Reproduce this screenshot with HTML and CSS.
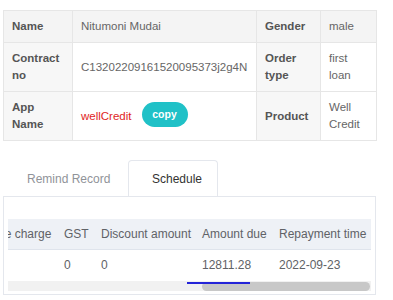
FILE: index.html
```html
<!DOCTYPE html>
<html>
<head>
<meta charset="utf-8">
<link rel="stylesheet" href="styles.css">
</head>
<body>
<div class="page">
  <table class="info">
    <colgroup>
      <col class="c1"><col class="c2"><col class="c3"><col class="c4">
    </colgroup>
    <tr class="head">
      <th>Name</th><td>Nitumoni Mudai</td><th>Gender</th><td>male</td>
    </tr>
    <tr>
      <th>Contract no</th><td>C13202209161520095373j2g4N</td><th>Order type</th><td>first loan</td>
    </tr>
    <tr>
      <th>App Name</th>
      <td><div class="app"><span class="app-name">wellCredit</span><button class="copy">copy</button></div></td>
      <th>Product</th><td>Well Credit</td>
    </tr>
  </table>

  <div class="tabs">
    <div class="tab remind">Remind Record</div>
    <div class="tab active">Schedule</div>
  </div>
  <div class="panel">
    <div class="scroll">
      <table class="sched">
        <colgroup>
          <col class="s1"><col class="s2"><col class="s3"><col class="s4"><col class="s5">
        </colgroup>
        <thead>
          <tr><th>Late charge</th><th>GST</th><th>Discount amount</th><th>Amount due</th><th>Repayment time</th></tr>
        </thead>
        <tbody>
          <tr><td></td><td>0</td><td>0</td><td>12811.28</td><td>2022-09-23</td></tr>
        </tbody>
      </table>
    </div>
    <div class="track">
      <div class="thumb"></div>
      <div class="focus-line"></div>
    </div>
  </div>
</div>
</body>
</html>
```

FILE: styles.css
```css
* { box-sizing: border-box; }
body {
  margin: 0;
  background: #fff;
  font-family: "Liberation Sans", Arial, sans-serif;
  font-size: 12px;
  color: #606266;
}
.page {
  width: 393px;
  padding: 10px 17px 0 3px;
}
.info {
  width: 373px;
  table-layout: fixed;
  border-collapse: collapse;
}
.info .c1 { width: 69px; }
.info .c2 { width: 184px; }
.info .c3 { width: 64px; }
.info .c4 { width: 56px; }
.info th, .info td {
  border: 1px solid #e6e6e6;
  padding: 7px 8px;
  line-height: 17px;
  text-align: left;
  vertical-align: middle;
  font-size: 11.5px;
}
.info th {
  font-weight: bold;
  color: #555;
  background: #f7f7f7;
}
.info td {
  color: #666;
  background: #fff;
}
.info tr.head th, .info tr.head td {
  background: #f4f4f4;
}
.app {
  display: flex;
  align-items: center;
  gap: 10px;
}
.app-name {
  color: #e01e1e;
}
.copy {
  width: 46px;
  height: 25px;
  border: none;
  border-radius: 13px;
  background: #20c1c7;
  color: #fff;
  font-family: "Liberation Sans", Arial, sans-serif;
  font-weight: bold;
  font-size: 10.5px;
  padding: 0;
  margin-top: -4px;
}
.tabs {
  display: flex;
  margin-top: 19px;
}
.tab {
  height: 36px;
  line-height: 36px;
  padding: 0 0 0 23px;
  color: #909399;
  border: 1px solid transparent;
  border-bottom: none;
  white-space: nowrap;
}
.tab.remind { width: 125px; }
.tab.active {
  width: 90px;
  color: #333;
  border-color: #e4e7ed;
  border-radius: 4px 4px 0 0;
}
.panel {
  border: 1px solid #e4e7ed;
  padding: 22px 4px 3px;
}
.scroll {
  display: flex;
  justify-content: flex-end;
  overflow: hidden;
}
.sched {
  flex: none;
  width: 389px;
  table-layout: fixed;
  border-collapse: collapse;
}
.sched .s1 { width: 76px; }
.sched .s2 { width: 37px; }
.sched .s3 { width: 101px; }
.sched .s4 { width: 77px; }
.sched .s5 { width: 98px; }
.sched th, .sched td {
  text-align: left;
  font-weight: normal;
  padding: 0 6px;
  white-space: nowrap;
  color: #606266;
}
.sched th {
  height: 30px;
  background: #eef1f6;
  border-bottom: 1px solid #dfe4ec;
}
.sched td {
  height: 32px;
}
.track {
  position: relative;
  height: 10px;
  background: #f1f1f1;
  display: flex;
  padding: 1px 1px 0 194px;
}
.thumb {
  flex: 1;
  height: 9px;
  border-radius: 5px;
  background: #c8c8c8;
}
.focus-line {
  position: absolute;
  left: 179px;
  top: 1px;
  width: 63px;
  height: 2px;
  background: #2424d8;
}
```
